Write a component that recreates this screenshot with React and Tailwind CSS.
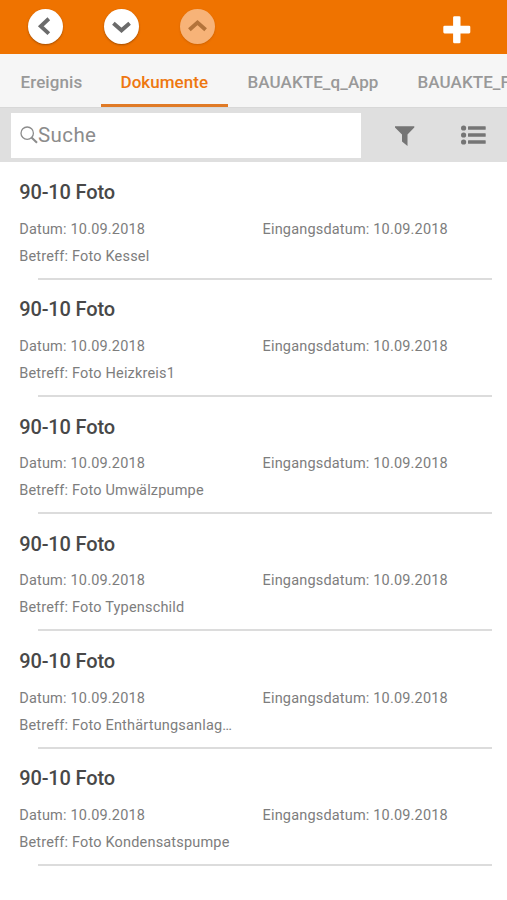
const documents = [
  'Foto Kessel',
  'Foto Heizkreis1',
  'Foto Umwälzpumpe',
  'Foto Typenschild',
  'Foto Enthärtungsanlag…',
  'Foto Kondensatspumpe',
];

function RoundButton({ points, className }) {
  return (
    <button className={`h-[35px] w-[35px] shrink-0 rounded-full ${className}`}>
      <svg viewBox="0 0 35 35" className="h-full w-full" fill="none" strokeWidth="3.9">
        <polyline points={points} stroke="currentColor" />
      </svg>
    </button>
  );
}

function Header() {
  return (
    <header className="flex h-[54px] shrink-0 items-start bg-[#ef7300] pt-[8.5px] pl-[27.5px]">
      <RoundButton points="20.8,9.8 12.8,17.2 20.8,24.6" className="mr-[41px] bg-white text-[#6b6b6b] shadow-[0_1px_2px_rgba(90,40,0,0.5)]" />
      <RoundButton points="9.4,14.3 17.5,21.3 25.6,14.3" className="mr-[41px] bg-white text-[#6b6b6b] shadow-[0_1px_2px_rgba(90,40,0,0.5)]" />
      <RoundButton points="9.4,20.7 17.5,13.5 25.6,20.7" className="bg-[#f7b378] text-[#b3733a] shadow-[0_1px_2px_rgba(150,70,0,0.35)]" />
      <svg viewBox="0 0 28 28" className="mt-[7.5px] ml-[228px] h-7 w-7 shrink-0" fill="#fff">
        <rect x="10.1" y="0.3" width="7.4" height="27" rx="1.3" />
        <rect x="0.3" y="9.8" width="27" height="7.6" rx="1.3" />
      </svg>
    </header>
  );
}

function Tabs() {
  return (
    <nav className="flex h-[53.5px] shrink-0 overflow-hidden border-b border-[#d8d8d8] bg-[#f6f6f6] text-[17px] leading-[56px] font-medium whitespace-nowrap text-[#999]">
      <span className="w-[101px] shrink-0 pl-[20.5px] tracking-[0.1px]">Ereignis</span>
      <span className="h-[53px] w-[127px] shrink-0 border-b-[3px] border-[#e07a26] pl-[19.5px] tracking-[0.05px] text-[#ee7710]">Dokumente</span>
      <span className="w-[170px] shrink-0 pl-[19.5px] tracking-[0.08px]">BAUAKTE_q_App</span>
      <span className="shrink-0 pl-[19.5px] tracking-[0.08px]">BAUAKTE_F</span>
    </nav>
  );
}

function SearchBar() {
  return (
    <div className="flex h-[54.5px] shrink-0 items-start bg-[#dfdfdf] pt-[5.5px] pl-[10.5px] text-[#757575]">
      <div className="flex h-[44.5px] w-[350px] shrink-0 items-center bg-white pl-[9.5px] text-[#8c8c8c]">
        <svg viewBox="0 0 18 18" className="h-[18px] w-[18px] shrink-0" fill="none" stroke="currentColor">
          <circle cx="7.2" cy="7.2" r="6.2" strokeWidth="1.3" />
          <path d="M11.5 11.5 L17 16.7" strokeWidth="2.1" />
        </svg>
        <span className="text-[20.5px] leading-6 tracking-[0.4px]">Suche</span>
      </div>
      <svg viewBox="0 0 20 21" className="mt-[12.5px] ml-[34px] h-[21px] w-5 shrink-0" fill="currentColor">
        <path d="M0 0.3 H19.3 V1.5 L12.5 8.5 V20 L7 15.5 V8.5 L0 1.5 Z" />
      </svg>
      <svg viewBox="0 0 25 20" className="mt-[12px] ml-[46px] h-5 w-[25px] shrink-0" fill="currentColor">
        <circle cx="2.6" cy="3" r="2.6" />
        <circle cx="2.6" cy="10" r="2.6" />
        <circle cx="2.6" cy="17" r="2.6" />
        <rect x="7" y="1.2" width="17.7" height="3.6" rx="0.6" />
        <rect x="7" y="8.2" width="17.7" height="3.6" rx="0.6" />
        <rect x="7" y="15.2" width="17.7" height="3.6" rx="0.6" />
      </svg>
    </div>
  );
}

function DocumentItem({ subject }) {
  return (
    <li className="flex h-[117.25px] flex-col pl-[19.25px] text-[14.5px] leading-[27px] tracking-[0.18px] text-[#7d7d7d]">
      <h2 className="mt-[15px] text-[20px] leading-[30px] font-medium tracking-[-0.15px] text-[#484848]">90-10 Foto</h2>
      <div className="mt-[8.7px] flex">
        <span className="w-[243.25px]">Datum: 10.09.2018</span>
        <span>Eingangsdatum: 10.09.2018</span>
      </div>
      <p>Betreff: {subject}</p>
      <div className="mt-[8px] mr-[15px] ml-[18.25px] h-[2px] shrink-0 bg-[#dcdcdc]" />
    </li>
  );
}

export default function App() {
  return (
    <div className="flex h-[900px] w-[507px] flex-col overflow-hidden bg-white font-['Roboto',sans-serif]">
      <Header />
      <Tabs />
      <SearchBar />
      <ul>
        {documents.map((subject) => (
          <DocumentItem key={subject} subject={subject} />
        ))}
      </ul>
    </div>
  );
}
